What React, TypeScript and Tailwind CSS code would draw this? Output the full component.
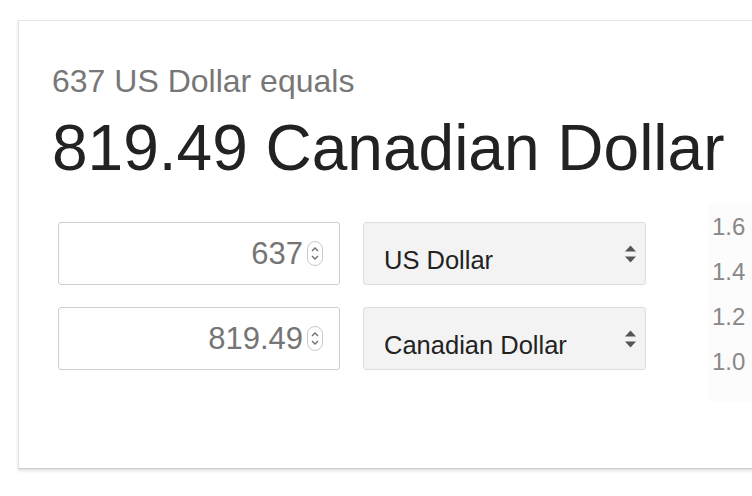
const font = { fontFamily: '"Liberation Sans", Arial, sans-serif' };

function Spinner() {
   return (
      <svg width="16" height="25" viewBox="0 0 16 25" className="shrink-0">
         <rect x="0.5" y="0.5" width="15" height="24" rx="7.5" fill="#fff" stroke="#c9c9c9" />
         <path d="M5 10 L8 7 L11 10" fill="none" stroke="#6b6b6b" strokeWidth="1.3" />
         <path d="M5 15 L8 18 L11 15" fill="none" stroke="#6b6b6b" strokeWidth="1.3" />
      </svg>
   );
}

function SelectArrows() {
   return (
      <svg width="11" height="18" viewBox="0 0 11 18" className="shrink-0">
         <path d="M0 6.5 L5.5 0.5 L11 6.5 Z" fill="#555" />
         <path d="M0 11.5 L11 11.5 L5.5 17.5 Z" fill="#555" />
      </svg>
   );
}

function NumberBox({ value }: { value: string }) {
   return (
      <div className="flex h-[63px] w-[282px] items-center justify-end gap-[4px] rounded-[3px] border border-[#cdcdcd] bg-white pr-[16px]">
         <span className="text-[31px] leading-none text-[#757575]">{value}</span>
         <Spinner />
      </div>
   );
}

function CurrencySelect({ label }: { label: string }) {
   return (
      <div className="flex h-[63px] w-[283px] items-center justify-between rounded-[3px] border border-[#dedede] bg-[#f3f3f3] pl-[20px] pr-[9px]">
         <span className="pt-[14px] text-[25.5px] leading-none text-[#222]">{label}</span>
         <SelectArrows />
      </div>
   );
}

export default function App()
{
   const ticks = ["1.6", "1.4", "1.2", "1.0"];

   return (
      <div className="h-[496px] w-[752px] overflow-hidden bg-white" style={font}>
         <div className="ml-[18px] mt-[20px] h-[449px] w-[820px] border border-[#e3e3e3] border-b-[#cbcbcb] bg-white pl-[33px] pt-[42px] shadow-[0_2px_3px_rgba(0,0,0,0.12)]">
            <div className="text-[32px] leading-[36px] text-[#777]">637 US Dollar equals</div>
            <div className="mt-[13px] text-[64px] leading-[72px] text-[#222]">819.49 Canadian Dollar</div>

            <div className="mt-[20px] flex items-start">
               <div className="ml-[6px] flex flex-col gap-[22px] pt-[18px]">
                  <NumberBox value="637" />
                  <NumberBox value="819.49" />
               </div>
               <div className="ml-[23px] flex flex-col gap-[22px] pt-[18px]">
                  <CurrencySelect label="US Dollar" />
                  <CurrencySelect label="Canadian Dollar" />
               </div>
               <div className="ml-[62px] h-[198px] w-[120px] bg-[#fcfcfc] pl-[4px]">
                  {ticks.map((t) => (
                     <div key={t} className="text-[24px] leading-[45px] text-[#888]">{t}</div>
                  ))}
               </div>
            </div>
         </div>
      </div>
   );
}
